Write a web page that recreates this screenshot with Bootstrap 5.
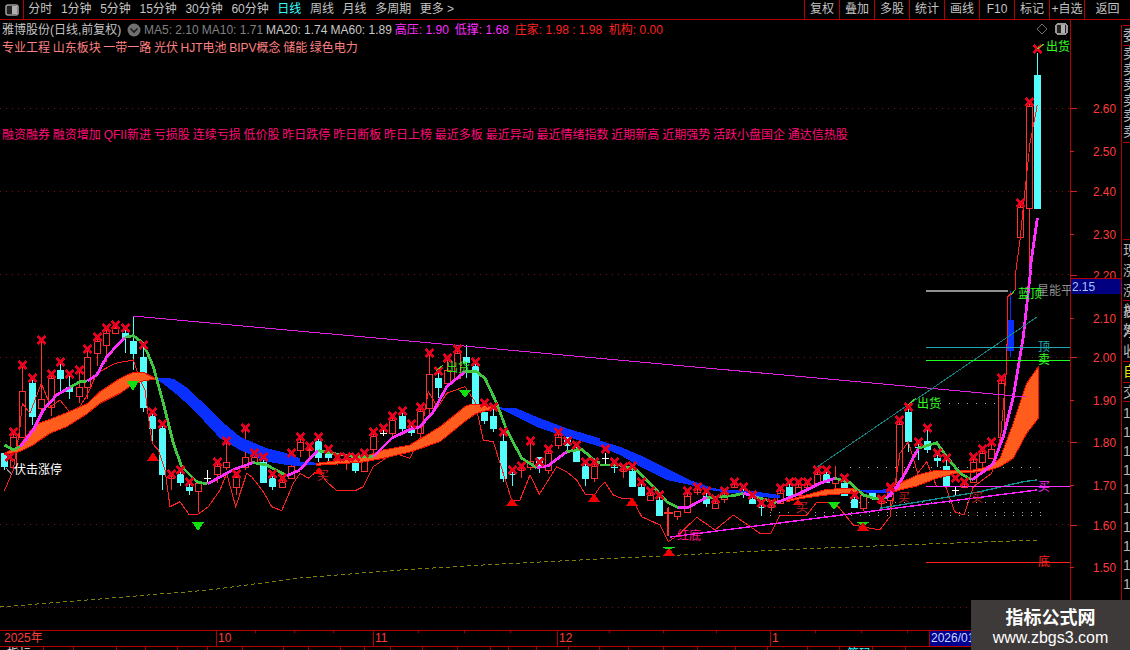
<!DOCTYPE html>
<html lang="zh">
<head>
<meta charset="utf-8">
<title>雅博股份</title>
<link rel="stylesheet" href="https://cdn.jsdelivr.net/npm/bootstrap@5.3.0/dist/css/bootstrap.min.css">
<style>
html,body{background:#000;margin:0;height:650px;overflow:hidden;font-family:"Liberation Sans","Noto Sans CJK SC",sans-serif;font-size:12px;line-height:16px;color:#c4c4c4}
.term-page{width:1130px;height:650px;background:#000}
.term-top{height:20px;border-bottom:1px solid #b40000}
.term-toggle{width:24px;height:19px;border-right:1px solid #b40000}
.term-tab.nav-link{padding:0 4.3px;color:#c4c4c4;font-size:12px;line-height:19px}
.term-tab.on{color:#3ff}
.term-tool.nav-link{width:35px;padding:0;color:#c4c4c4;font-size:12px;line-height:19px;text-align:center;border-left:1px solid #b40000}
.term-tool.last{width:46px}
.term-left{width:1121px}
.term-plot{width:1121px;height:610px}
.term-svg{left:0;top:0;display:block}
.term-head{z-index:1;width:1060px}
.q-row{height:18px;line-height:18px;gap:3px;padding-left:2px;padding-top:1px}
.q-name{width:122px}
.q-down{width:14px;height:14px;margin-top:2px}
.q-ma{color:#808080}.q-mb{color:#c8c8c8}
.q-hi{color:#ff2cff;width:57px}
.q-zh{color:#ff2020;width:91px}
.q-jg{color:#ff2020}
.q-tags{color:#ff8080;padding-left:2px;line-height:18px;margin-top:1px;word-spacing:-.7px}
.q-pink{color:#ff0c78;padding-left:2px;line-height:18px;margin-top:69px;word-spacing:-.5px}
.sv-t{font-family:"Liberation Sans","Noto Sans CJK SC",sans-serif;font-size:12px}
.term-time{height:17px;border-top:1px solid #b40000;border-bottom:1px solid #b40000;color:#ff3c3c;line-height:15px;font-size:12px}
.time-ticks{left:0;top:0;width:1121px;height:3px;display:block}
.t-cell{border-left:1px solid #b40000;padding-left:1px}
.t-a{width:216px;border-left:0;padding-left:4px}.t-b{width:157px}.t-c{width:184px}.t-d{width:213px}.t-e{width:159px}
.t-f{width:42px;background:#000090;color:#c8d8ff}
.term-bot{height:3px;line-height:14px;font-size:12px}
.b-cell{border-left:1px solid #b40000;color:#e0e0e0;flex:none}
.b-cy{color:#3ff;padding-left:7px}
.b-wh{padding-left:7px}
.term-side{width:9px;margin-top:5px;height:625px;border-left:1px solid #b40000;font-size:14px;color:#b8b8b8;padding-left:1px}
.s-r{border-top:1px solid #b40000;line-height:19px}
.s-a{height:20px}.s-b{height:97px;line-height:15.5px}.s-c{height:97px}.s-d{height:61px;line-height:20px}.s-e{height:21px;color:#e8e800}.s-f{height:19px}.s-g{height:196px;padding-top:2px;line-height:19px;font-family:"Liberation Sans",sans-serif}
.term-mark{right:0;bottom:0;width:159px;height:50px;background:#3e3a39;color:#fff;z-index:3;text-align:center}
.mark-a{font-size:18px;font-weight:700;line-height:20px;margin-top:6px;font-family:"Noto Sans CJK SC",sans-serif}
.mark-b{font-size:16px;line-height:18px;margin-top:3px}
</style>
</head>
<body>
<div class="term-page d-flex flex-column position-relative">
  <div class="term-top d-flex justify-content-between">
    <div class="d-flex">
      <div class="term-toggle d-flex align-items-center justify-content-center">
        <svg width="14" height="12" viewBox="0 0 14 12"><rect x="1" y="1" width="12" height="10" rx="2" fill="#222" stroke="#9a9a9a" stroke-width="1.6"/><rect x="7" y="2" width="5" height="8" fill="#b0b0b0"/></svg>
      </div>
      <nav class="nav flex-nowrap">
        <a class="nav-link term-tab" href="#">分时</a>
        <a class="nav-link term-tab" href="#">1分钟</a>
        <a class="nav-link term-tab" href="#">5分钟</a>
        <a class="nav-link term-tab" href="#">15分钟</a>
        <a class="nav-link term-tab" href="#">30分钟</a>
        <a class="nav-link term-tab" href="#">60分钟</a>
        <a class="nav-link term-tab on" href="#">日线</a>
        <a class="nav-link term-tab" href="#">周线</a>
        <a class="nav-link term-tab" href="#">月线</a>
        <a class="nav-link term-tab" href="#">多周期</a>
        <a class="nav-link term-tab" href="#">更多 &gt;</a>
      </nav>
    </div>
    <nav class="nav flex-nowrap">
      <a class="nav-link term-tool" href="#">复权</a>
      <a class="nav-link term-tool" href="#">叠加</a>
      <a class="nav-link term-tool" href="#">多股</a>
      <a class="nav-link term-tool" href="#">统计</a>
      <a class="nav-link term-tool" href="#">画线</a>
      <a class="nav-link term-tool" href="#">F10</a>
      <a class="nav-link term-tool" href="#">标记</a>
      <a class="nav-link term-tool" href="#">+自选</a>
      <a class="nav-link term-tool last" href="#">返回</a>
    </nav>
  </div>
  <div class="d-flex">
    <div class="term-left d-flex flex-column">
      <div class="term-plot position-relative">
        <svg id="chart" class="term-svg position-absolute" width="1121" height="610" viewBox="0 20 1121 610" shape-rendering="crispEdges"></svg>
        <div class="term-head position-relative text-nowrap">
          <div class="q-row d-flex">
            <span class="q-name">雅博股份(日线,前复权)</span>
            <svg class="q-down" viewBox="0 0 14 14"><circle cx="7" cy="7" r="6.5" fill="#707070"/><path d="M3.5 5.5 7 9l3.5-3.5" fill="none" stroke="#1c1c1c" stroke-width="1.6"/></svg>
            <span class="q-ma">MA5: 2.10</span>
            <span class="q-ma">MA10: 1.71</span>
            <span class="q-mb">MA20: 1.74</span>
            <span class="q-mb">MA60: 1.89</span>
            <span class="q-hi">高压: 1.90</span>
            <span class="q-hi">低撑: 1.68</span>
            <span class="q-zh">庄家: 1.98 : 1.98</span>
            <span class="q-jg">机构: 0.00</span>
          </div>
          <div class="q-tags">专业工程 山东板块 一带一路 光伏 HJT电池 BIPV概念 储能 绿色电力</div>
          <div class="q-pink">融资融券 融资增加 QFII新进 亏损股 连续亏损 低价股 昨日跌停 昨日断板 昨日上榜 最近多板 最近异动 最近情绪指数 近期新高 近期强势 活跃小盘国企 通达信热股</div>
        </div>
      </div>
      <div class="term-time d-flex text-nowrap position-relative">
        <svg id="ticks" class="time-ticks position-absolute" viewBox="0 0 1121 3" shape-rendering="crispEdges"></svg>
        <span class="t-cell t-a">2025年</span><span class="t-cell t-b">10</span><span class="t-cell t-c">11</span><span class="t-cell t-d">12</span><span class="t-cell t-e">1</span><span class="t-cell t-f overflow-hidden">2026/01</span>
      </div>
      <div id="tabs" class="term-bot d-flex overflow-hidden text-nowrap"></div>
    </div>
    <div class="term-side overflow-hidden text-nowrap">
      <div class="s-r s-a">委比</div>
      <div class="s-r s-b">卖五<br>卖四<br>卖三<br>卖二<br>卖一<br>卖零</div>
      <div class="s-r s-c"></div>
      <div class="s-r s-d s-c">现价<br>涨跌<br>涨幅<br>总量<br>外盘</div>
      <div class="s-r s-d">换手<br>净资<br>收益</div>
      <div class="s-r s-e">自选</div>
      <div class="s-r s-f">交易</div>
      <div class="s-r s-g">1<br>1<br>1<br>1<br>1<br>1<br>1<br>1<br>1<br>1</div>
    </div>
  </div>
  <div class="term-mark position-absolute">
    <div class="mark-a">指标公式网</div>
    <div class="mark-b">www.zbgs3.com</div>
  </div>
</div>
<script src="https://cdn.jsdelivr.net/npm/bootstrap@5.3.0/dist/js/bootstrap.bundle.min.js"></script>
<script>
(function(){
var Z3=[0,310],Z4=[300,330],Z5=[600,400],Z6=[880,270],Z7=[980,20];
var CY='#54fcfc',RD='#ff3030',BL='#0a30ff',MG='#ff30ff',GN='#40c840';
var out={grid:'',cand:'',env:'',band:'',ma:'',line:'',x:'',txt:''};
function pts(z,a){var r=[];for(var i=0;i<a.length;i+=2)r.push([z[0]+a[i]/3,z[1]+a[i+1]/3]);return r;}
function pl(p){return p.map(function(q){return q[0].toFixed(1)+','+q[1].toFixed(1)}).join(' ');}
function poly(p,c,w,extra){return '<polyline points="'+pl(p)+'" fill="none" stroke="'+c+'" stroke-width="'+w+'" '+(extra||'')+'/>';}
function ln(x1,y1,x2,y2,c,w,extra){return '<line x1="'+x1+'" y1="'+y1+'" x2="'+x2+'" y2="'+y2+'" stroke="'+c+'" stroke-width="'+(w||1)+'" '+(extra||'')+'/>';}
function xm(cx,cy){var s=4;out.x+=ln(cx-s,cy-s,cx+s,cy+s,'#e6001e',3)+ln(cx-s,cy+s,cx+s,cy-s,'#e6001e',3);}
function candle(z,d){
  var cx=Math.round(z[0]+d[0]/3),t=d[1],hi=z[1]+d[2]/3,top=Math.round(z[1]+d[3]/3),bot=Math.round(z[1]+d[4]/3),lo=z[1]+d[5]/3;
  var c=t=='c'?CY:t=='b'?BL:t=='w'?'#fff':RD;var px=cx+.5;
  out.cand+=ln(px,hi,px,lo,c,1);
  if(t=='w'){out.cand+=ln(cx-3,top+.5,cx+4,top+.5,c,1);}
  else if(bot-top<1){out.cand+=ln(cx-3,top+.5,cx+4,top+.5,c,1);}
  else{out.cand+='<rect x="'+(cx-2.5)+'" y="'+(top+.5)+'" width="6" height="'+(bot-top)+'" fill="'+(t=='r'?'#000':c)+'" stroke="'+c+'"/>';}
  if(d[6])xm(cx+.5,z[1]+(d[6]===1?d[2]:d[6])/3);
}
function band(z,a,fill,edge){
  var up=[],dn=[];a.forEach(function(r){up.push([z[0]+r[0]/3,z[1]+r[1]/3]);dn.unshift([z[0]+r[0]/3,z[1]+r[2]/3]);});
  out.band+='<polygon points="'+pl(up.concat(dn))+'" fill="'+fill+'"'+(edge?' stroke="'+edge+'"':'')+'/>';
}
function lowerEdge(z,a,c){out.band+=poly(a.map(function(r){return [z[0]+r[0]/3,z[1]+r[2]/3]}),c,1);}
function ma(z,c,a){out.ma+=poly(pts(z,a),c,2.8);}
function tri(cx,y1,y2,c,down,hw){var w=hw||6;
  out.x+='<polygon points="'+(down?(cx-w)+','+y1+' '+(cx+w)+','+y1+' '+cx+','+y2:(cx-w)+','+y2+' '+(cx+w)+','+y2+' '+cx+','+y1)+'" fill="'+c+'"/>';}
function label(x,y,s,c,size){out.txt+='<text class="sv-t" x="'+x+'" y="'+y+'" fill="'+c+'"'+(size?' font-size="'+size+'"':'')+' shape-rendering="auto">'+s+'</text>';}

/* grid */
[108,191,274,357,441,524,607].forEach(function(y){out.grid+=ln(0,y+.5,1070,y+.5,'#861010',1,'stroke-dasharray="1 5"');});
/* white dotted levels */
[[940,1000,403],[850,1042,467],[850,1042,502],[770,1042,512],[770,1042,515]].forEach(function(r){out.grid+=ln(r[0],r[2]+.5,r[1],r[2]+.5,'#aaa',1,'stroke-dasharray="1 8"');});
/* olive base line */
out.grid+=poly([[0,607],[100,599],[209,590],[300,578],[400,570],[500,564],[600,559],[700,554],[800,549],[900,545],[1037,540]],'#7f7f00',1,'stroke-dasharray="4 3"');

/* candles */
[[13,'c',430,430,468,480,0],[40,'r',365,380,470,470,1],[67,'r',165,243,380,380,1],[97,'c',205,218,318,345,1],[124,'r',90,267,293,320,1],[152,'r',193,205,290,318,1],[179,'c',155,180,205,243,1],[208,'c',193,232,242,267,1],[236,'r',180,232,257,280,1],[262,'r',118,142,232,267,1],[290,'r',80,93,130,168,1],[317,'r',55,70,106,155,1],[346,'r',45,55,70,70,1],[374,'c',55,68,80,130,1],[400,'c',20,93,130,180,0],[428,'c',105,142,290,305,1],[457,'c',305,318,355,395,1],[485,'c',343,355,492,540,1],[512,'r',492,505,505,540,1],[540,'c',480,493,516,528,1],[566,'c',517,530,540,555,1],[595,'r',518,518,542,605,0],[622,'w',480,505,505,516,0],[650,'r',457,467,493,520,1],[677,'r',393,455,470,480,1],[707,'r',492,500,530,555,1],[734,'r',355,442,470,480,1],[761,'r',430,442,456,456,1],[788,'c',442,455,516,516,1],[816,'c',492,505,528,540,1],[845,'r',503,516,530,530,1],[872,'r',430,467,505,505,1]].forEach(function(d){candle(Z3,d)});
xm(9.5,457);
[[0,'r',320,335,360,380,1],[27,'r',347,358,360,385,1],[55,'c',320,333,380,395,1],[83,'c',358,372,380,395,1],[110,'r',380,395,395,405,1],[137,'r',380,395,395,420,1],[165,'c',380,400,420,430,1],[193,'r',370,385,422,422,1],[220,'r',307,318,358,370,1],[248,'w',295,310,310,318,1],[275,'r',258,270,308,320,1],[305,'c',243,258,293,305,1],[332,'c',283,295,305,318,1],[360,'r',232,243,308,333,1],[387,'r',70,133,233,260,1],[413,'c',122,145,170,205,1],[442,'r',83,120,158,170,1],[470,'r',58,70,145,150,1],[497,'c',45,82,95,145,0],[525,'c',95,107,218,220,1],[553,'c',220,245,270,283,1],[580,'c',232,258,293,305,1],[608,'c',307,333,443,455,1],[635,'c',420,432,432,467,1],[663,'r',408,420,420,443,1],[690,'r',333,393,410,420,1],[718,'c',397,382,408,430,1],[745,'r',358,370,420,432,1],[773,'r',307,320,345,358,1],[800,'c',333,320,345,370,1],[828,'c',345,358,393,393,1],[856,'c',397,408,443,467,1],[883,'r',397,408,445,455,1]].forEach(function(d){candle(Z4,d)});
[[14,'w',160,175,175,192,148],[41,'c',185,200,200,220,1],[68,'r',200,212,212,233,1],[96,'c',198,212,258,258,1],[123,'c',247,260,285,285,1],[151,'r',273,285,300,300,1],[178,'c',286,300,345,345,1],[205,'r',322,340,340,408,0],[232,'r',333,333,347,360,0],[262,'r',273,287,335,335,1],[290,'r',262,275,275,285,1],[317,'c',273,287,310,320,1],[344,'r',298,310,323,323,1],[371,'r',273,288,298,310,1],[401,'r',247,262,262,265,1],[428,'c',262,275,275,295,1],[455,'c',286,298,308,308,1],[482,'c',308,322,322,347,1],[513,'r',308,322,322,333,1],[540,'r',263,278,310,310,1],[566,'c',247,260,285,285,1],[594,'r',247,260,285,285,1],[620,'r',247,262,262,265,1],[650,'r',210,222,248,248,1],[677,'c',210,222,247,247,1],[704,'r',198,235,248,285,0],[731,'c',235,248,285,285,1],[761,'c',285,298,320,320,1],[788,'r',286,286,323,333,0],[816,'c',278,278,288,300,0],[843,'r',298,310,310,320,1],[870,'r',262,272,298,325,1]].forEach(function(d){candle(Z5,d)});
out.cand+=ln(668,508,668,536,RD,2.4)+ln(664,513,673,513,RD,2);
[[30,'r',655,668,690,700,1],[58,'r',450,463,635,635,1],[85,'c',410,425,513,545,1],[113,'c',515,530,530,570,1],[140,'c',475,513,537,548,1],[170,'c',550,563,570,590,1],[197,'c',563,588,648,648,1],[224,'w',650,660,660,675,625],[252,'r',637,650,650,650,1],[278,'r',562,575,637,637,1],[307,'r',538,550,575,592,1],[334,'r',515,538,565,565,1],[362,'r',325,338,500,500,1],[390,'b',62,150,240,262,0]].forEach(function(d){candle(Z6,d)});
[[119,'r',550,562,652,652,1],[146,'r',247,258,565,750,1],[172,'c',100,165,563,563,88]].forEach(function(d){candle(Z7,d)});

/* thin low envelope */
var e=[].concat(
 pts(Z3,[13,543,40,480,60,350,67,280,90,310,124,220,152,290,180,270,208,305,236,295,262,255,290,190,345,160,400,150,420,210,435,240,445,320,457,400,475,420,495,480,510,590,540,575,566,612,595,612,625,590,660,540,680,490,707,590,740,490,755,500,790,545,815,590,845,602,880,520,900,490]),
 pts(Z4,[25,445,55,420,80,455,110,482,165,482,190,470,220,410,250,390,280,368,330,385,360,325,385,185,413,232,440,190,495,170,525,215,550,330,580,335,635,510,660,510,690,435,718,493,770,410,800,425,830,450,856,493,885,493,900,470]),
 pts(Z5,[15,247,40,285,65,295,95,295,125,350,180,375,205,425,235,405,290,352,345,390,400,345,480,400,513,400,540,345,620,345,650,307,704,307,760,375,840,390]),
 pts(Z6,[30,740,60,550,85,515,113,610,140,575,170,650,197,650,224,725,252,735,280,650,335,610,362,500,380,290,383,80,405,60,408,0]),
 pts(Z7,[120,660,135,510,150,370,172,255]));
out.env=poly(e,'#ff2020',1);

/* bands */
band(Z3,[[14,430,432],[30,422,430],[60,405,425],[100,352,405],[120,338,390],[150,328,370],[200,308,350],[260,282,312],[300,245,280],[360,205,250],[400,187,222],[430,187,213],[465,205,207]],'#ff5c1e','#f01000');
band(Z3,[[465,203,205],[490,203,222],[520,206,245],[560,232,280],[600,270,320],[660,330,385],[720,380,420],[800,415,455],[860,430,465],[900,445,468]],BL);
lowerEdge(Z3,[[465,205],[520,245],[600,320],[660,385],[720,420],[800,455],[860,465],[900,468]],'#20e020');
band(Z4,[[0,395,407],[30,395,405],[55,400,405]],BL);
band(Z4,[[50,400,406],[110,392,402],[190,382,396],[250,360,385],[330,345,366],[420,290,335],[500,226,270],[530,222,250],[590,232,234]],'#ff5c1e','#f01000');
band(Z4,[[595,232,234],[650,235,260],[720,265,295],[800,295,320],[900,325,350]],BL);
lowerEdge(Z4,[[595,234],[650,260],[720,295],[800,320],[900,350]],'#20e020');
band(Z5,[[0,122,140],[60,140,165],[130,170,205],[200,205,240],[270,240,255],[340,265,272],[400,270,280],[470,275,290],[540,285,295]],BL);
lowerEdge(Z5,[[130,205],[200,240],[270,255]],'#20e020');
band(Z5,[[560,300,305],[600,290,296],[680,268,285],[750,265,280],[780,270,275]],'#ff5c1e','#f01000');
band(Z5,[[780,270,272],[800,270,278],[870,268,278]],BL);
band(Z6,[[0,660,670],[15,660,670]],BL);
band(Z6,[[40,662,667],[60,640,660],[110,615,648],[170,600,625],[230,600,610],[280,600,607],[330,588,600],[360,565,590],[400,460,565],[440,340,490],[475,290,445]],'#ff5c1e','#f01000');

/* moving average */
ma(Z3,GN,[14,405,40,420,60,410]);
ma(Z3,MG,[60,410,100,360,130,300,170,255,210,232]);
ma(Z3,GN,[210,232,240,215,262,213]);
ma(Z3,MG,[262,213,290,195,320,140,375,82]);
ma(Z3,GN,[375,82,400,77,430,100,460,170,490,280,520,400,545,470,590,515,622,522]);
ma(Z3,MG,[622,522,680,490,710,475,760,458]);
ma(Z3,GN,[760,458,800,465,860,497]);
ma(Z3,MG,[860,497,900,480]);
ma(Z4,MG,[0,420,30,385,55,362]);
ma(Z4,GN,[55,362,110,372,165,380,220,380]);
ma(Z4,MG,[220,380,275,325,330,298,360,290,400,245,440,170,495,125]);
ma(Z4,GN,[495,125,530,125,555,145,590,220,620,300,665,385,710,413]);
ma(Z4,MG,[710,413,745,407,800,365]);
ma(Z4,GN,[800,365,845,357,875,385,900,400]);
ma(Z5,GN,[0,195,25,195,60,195,110,210,160,260,200,305,235,323]);
ma(Z5,MG,[235,323,265,322,320,292]);
ma(Z5,GN,[320,292,340,292,400,287,430,280]);
ma(Z5,MG,[430,280,470,292]);
ma(Z5,GN,[470,292,530,308]);
ma(Z5,MG,[530,308,600,280,660,250,705,235]);
ma(Z5,GN,[705,235,750,248,790,285,830,297,860,293]);
ma(Z5,MG,[860,293,900,255]);
ma(Z6,MG,[30,680,70,620,115,535]);
ma(Z6,GN,[115,535,170,518,200,560,240,610,275,630]);
ma(Z6,MG,[275,630,310,605,340,580,370,500,400,380,430,200,452,0]);
ma(Z7,MG,[150,750,172,595]);

/* trend lines */
out.line+=ln(133,316,1026,397,'#e020e0',1);
out.line+=ln(670,537,1037,490,'#ff20ff',1.4);
out.line+=ln(817,467,1037,317,'#108080',1);
out.line+=poly(pts(Z6,[0,715,120,695,300,665,430,635,470,630]),'#109090',1.4);
out.line+=ln(926,290.5,1008,290.5,'#909090',2);
out.line+=ln(926,347.5,1070,347.5,'#20a8b0',1);
out.line+=ln(926,360.5,1070,360.5,'#20ff20',1);
out.line+=ln(926,486.5,1070,486.5,'#ff30ff',1);
out.line+=ln(926,562.5,1070,562.5,'#ff2020',1);
out.line+=ln(6,468,12,475,'#909090',1);
[[1037,49,1044,44],[908,405,916,398],[436,371,443,365],[1011,295,1015,290]].forEach(function(r){out.x+=ln(r[0],r[1],r[2],r[3],'#40e020',1);});

/* signals */
tri(133,381,391,'#10e010',1);tri(198,522,531,'#10e010',1);tri(465,390,398,'#10e010',1);tri(834,502,510,'#10e010',1);
tri(669,547,550,'#10e010',1,7);tri(863,522,526,'#10e010',1,7);
tri(153,452,461,'#f00000');tri(319,467,474,'#f00000',0,5);tri(512,498,506,'#f00000');tri(594,493,502,'#f00000');
tri(632,497,506,'#f00000');tri(669,548,556,'#f00000');tri(798,499,505,'#f00000',0,5);tri(863,522,531,'#f00000');

/* labels on the plot */
label(14,474,'伏击涨停','#ffffff');
label(446,372,'出货','#30e020');
label(917,408,'出货','#30ff20');
label(1046,51,'出货','#30ff20');
label(1037,295,'星能平','#909090');
label(1018,298,'蓝顶','#30ff20');
label(1038,351,'顶','#20a8b0');
label(1038,364,'卖','#30ff20');
label(1038,491,'买','#ff30ff');
label(1038,566,'底','#ff2020');
label(898,502,'买','#c02020');
label(971,502,'买','#c02020');
label(796,512,'买','#c02020');
label(317,480,'买','#c02020');
label(677,540,'红底','#ff1480');

/* price axis */
out.line+=ln(1070.5,20,1070.5,630,'#b40000',1);
[[2.60,108],[2.50,151],[2.40,191],[2.30,234],[2.20,275],[2.10,318],[2.00,357],[1.90,400],[1.80,442],[1.70,485],[1.60,525],[1.50,567]].forEach(function(r,i){
  out.line+=ln(1070,r[1]+.5,i%2?1074:1077,r[1]+.5,'#d02020',1);
  out.txt+='<text class="sv-t" x="1093" y="'+(r[1]+5)+'" font-size="14" textLength="23" lengthAdjust="spacingAndGlyphs" fill="#ff3c3c">'+r[0].toFixed(2)+'</text>';
});
out.txt+='<rect x="1071" y="278" width="50" height="16" fill="#000080"/>'+ln(1070,278.5,1121,278.5,'#b40000',1);
out.txt+='<text class="sv-t" x="1072" y="291" font-size="14" textLength="23" lengthAdjust="spacingAndGlyphs" fill="#a8c4ff">2.15</text>';

/* small marks at plot corner */
out.txt+='<polygon points="1042,24 1047,29 1042,34 1037,29" fill="none" stroke="#707070"/>';
out.txt+='<rect x="1056" y="24" width="11" height="10" rx="2" fill="#222" stroke="#9a9a9a" stroke-width="1.4"/><rect x="1061" y="25" width="4" height="8" fill="#b0b0b0"/>';

document.getElementById('chart').innerHTML=out.grid+out.cand+out.env+out.band+out.ma+out.line+out.x+out.txt;

/* time axis ticks */
document.getElementById('ticks').innerHTML=[255,294,333,418,464,510,609,663,716,815,861,907].map(function(x){return ln(x+.5,0,x+.5,2,'#b40000',1)}).join('');

/* bottom tab dividers */
var div=[43,73,116,145,177,207,242,283,308,340,364,390,422,457,490,508,536,568,599,628,663,697,735,767,807,839,872,905,940],prev=0,h='<span class="b-cell b-wh" style="width:43px;border-left:0">指标</span>';
prev=43;
div.slice(1).forEach(function(x,i){var d=div[i];
  h+='<span class="b-cell'+(d==839?' b-cy':'')+'" style="width:'+(x-d)+'px">'+(d==839?'筹码':'')+'</span>';});
document.getElementById('tabs').innerHTML=h;
})();
</script>
</body>
</html>
